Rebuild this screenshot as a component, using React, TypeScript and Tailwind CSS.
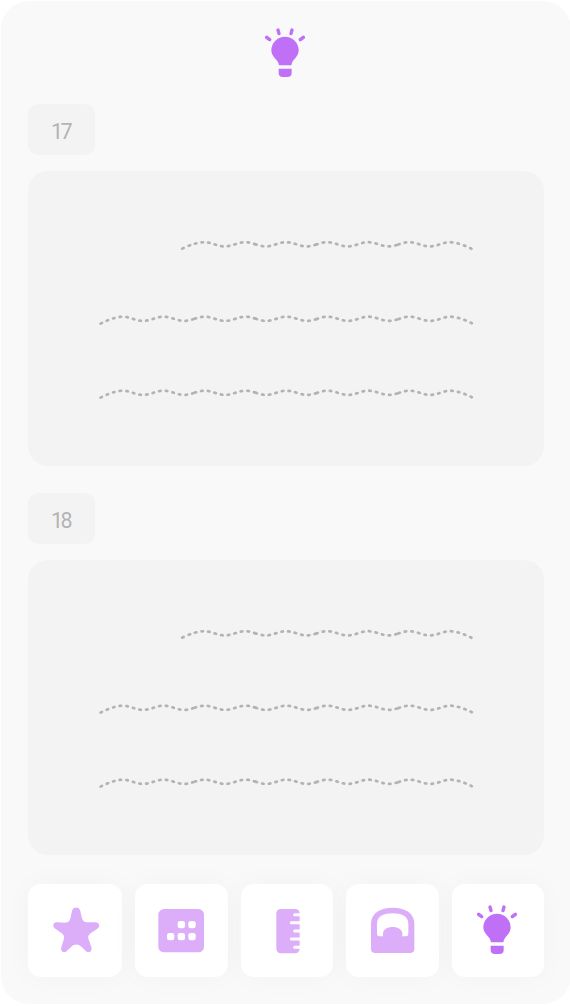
import React from "react";

function Bulb() {
  return (
    <svg width="42" height="50" viewBox="28 24 126 150" className="block text-[#c06ff7]" fill="currentColor">
      <path d="M73 136C71 118 50 112 50 91A41 41 0 0 1 132 91C132 112 112 118 110 136Z" />
      <path d="M72 146H111V158Q111 171 98 171H85Q72 171 72 158Z" />
      <path
        d="M36 52L45 59M70 30L73 41M112 30L109 41M146 52L137 59"
        fill="none"
        stroke="currentColor"
        strokeWidth="10"
        strokeLinecap="round"
      />
    </svg>
  );
}

function Star() {
  return (
    <svg width="92" height="92" viewBox="26 26 276 276" className="block shrink-0" fill="#dcaef9">
      <path d="M155 107C158 93 177 93 180 107L184 125C187 137 192 141 203 141L224 141C239 141 241 154 230 161L213 172C203 179 202 184 206 195L213 216C217 230 203 236 194 225L183 214C173 205 163 205 153 214L142 225C133 236 119 230 123 216L129 196C133 184 132 179 122 172L106 161C94 153 98 139 112 141L133 142C145 142 149 137 151 125Z" />
    </svg>
  );
}

function Abacus() {
  return (
    <svg width="92" height="92" viewBox="15 26 276 276" className="block shrink-0">
      <rect x="85" y="101" width="137" height="130" rx="17" fill="#dcaef9" />
      <g fill="#fff">
        <rect x="143" y="137" width="22" height="22" rx="7" />
        <rect x="175" y="137" width="22" height="22" rx="7" />
        <rect x="111" y="173" width="22" height="22" rx="7" />
        <rect x="143" y="173" width="22" height="22" rx="7" />
        <rect x="175" y="173" width="22" height="22" rx="7" />
      </g>
    </svg>
  );
}

function Ruler() {
  return (
    <svg width="92" height="92" viewBox="15 26 276 276" className="block shrink-0">
      <rect x="121" y="101" width="70" height="133" rx="14" fill="#dcaef9" />
      <path
        d="M176 118H200M166 142H200M176 167H200M166 191H200M176 216H200"
        stroke="#fff"
        strokeWidth="9"
        strokeLinecap="round"
      />
    </svg>
  );
}

function Scale() {
  return (
    <svg width="92" height="92" viewBox="18 26 276 276" className="block shrink-0">
      <path
        d="M93 145C93 113 121 97 158 97S223 113 223 145V220Q223 233 210 233H106Q93 233 93 220Z"
        fill="#dcaef9"
      />
      <path
        d="M111 145C111 122 133 114 158 114S205 122 205 145V176Q205 183 198 183H187V176C187 162 174 155 158 155S129 162 129 176V183H118Q111 183 111 176Z"
        fill="#fff"
      />
    </svg>
  );
}

function wave(from: number, to: number) {
  const points: string[] = [];
  for (let x = from; x <= to; x += 0.5) {
    let y = 4 - 2.1 * Math.cos(((x - 22) * 2 * Math.PI) / 41);
    const edge = x < 22 ? x : x > 350 ? 372 - x : 22;
    if (edge < 22) y = 1.9 + 6.9 * Math.pow(1 - edge / 22, 1.65);
    points.push(`${x} ${y.toFixed(2)}`);
  }
  return "M" + points.join("L");
}

// Each stretch starts its own dash sequence, so the joins carry a longer dash.
const longStretches = [
  [0, 94],
  [94, 155],
  [155, 216],
  [216, 298],
  [298, 372],
].map(([from, to]) => wave(from, to));

const shortStretches = [
  "M82 8.4Q95 2 104 1.9" + wave(104, 155).replace("M", "L"),
  wave(155, 216),
  wave(216, 298),
  wave(298, 372),
];

function Waves({ short = false }: { short?: boolean }) {
  return (
    <svg
      width={short ? 294 : 376}
      height="12"
      viewBox={short ? "79.8 -1.3 294 12" : "-2.6 -0.8 376 12"}
      className="block"
      fill="none"
      stroke="#b3b3b3"
      strokeWidth="2.7"
      strokeLinecap="round"
    >
      {(short ? shortStretches : longStretches).map((d) => (
        <path key={d} d={d} strokeDasharray="1.5 5.25" />
      ))}
    </svg>
  );
}

function Exercise({ number }: { number: number }) {
  return (
    <section>
      <div className="flex h-[51px] w-[67px] items-center justify-center rounded-[10px] bg-[#f3f3f3] pt-[4px] pr-[2px] font-['Roboto',sans-serif] text-[21.5px] leading-none tracking-[-2.5px] text-[#b3b3b3]">
        {number}
      </div>
      <div className="mt-4 flex h-[295px] flex-col items-end gap-[62.5px] rounded-[20px] bg-[#f3f3f3] pt-[68px] pr-[70px]">
        <Waves short />
        <Waves />
        <Waves />
      </div>
    </section>
  );
}

function Tool({ children }: { children: React.ReactNode }) {
  return (
    <button className="flex h-[92.7px] w-[92.6px] items-center justify-center rounded-[13px] bg-white shadow-[0_0_30px_rgba(0,0,0,0.03)] first:w-[94px]">
      {children}
    </button>
  );
}

export default function App() {
  return (
    <div className="h-[1006px] w-[570px] overflow-hidden bg-white pt-px pl-[1px]">
      <main className="h-[1002.5px] w-[570px] overflow-hidden rounded-[28px] bg-[#f9f9f9] pr-[27px] pl-[27px]">
        <header className="flex h-[103px] justify-center pt-[27px] pr-[1.6px]">
          <Bulb />
        </header>
        <div className="flex flex-col gap-[27px]">
          <Exercise number={17} />
          <Exercise number={18} />
        </div>
        <nav className="mt-[29px] -mr-[0.4px] flex justify-between">
          <Tool><Star /></Tool>
          <Tool><Abacus /></Tool>
          <Tool><Ruler /></Tool>
          <Tool><Scale /></Tool>
          <Tool><span className="pr-[1.6px]"><Bulb /></span></Tool>
        </nav>
      </main>
    </div>
  );
}
